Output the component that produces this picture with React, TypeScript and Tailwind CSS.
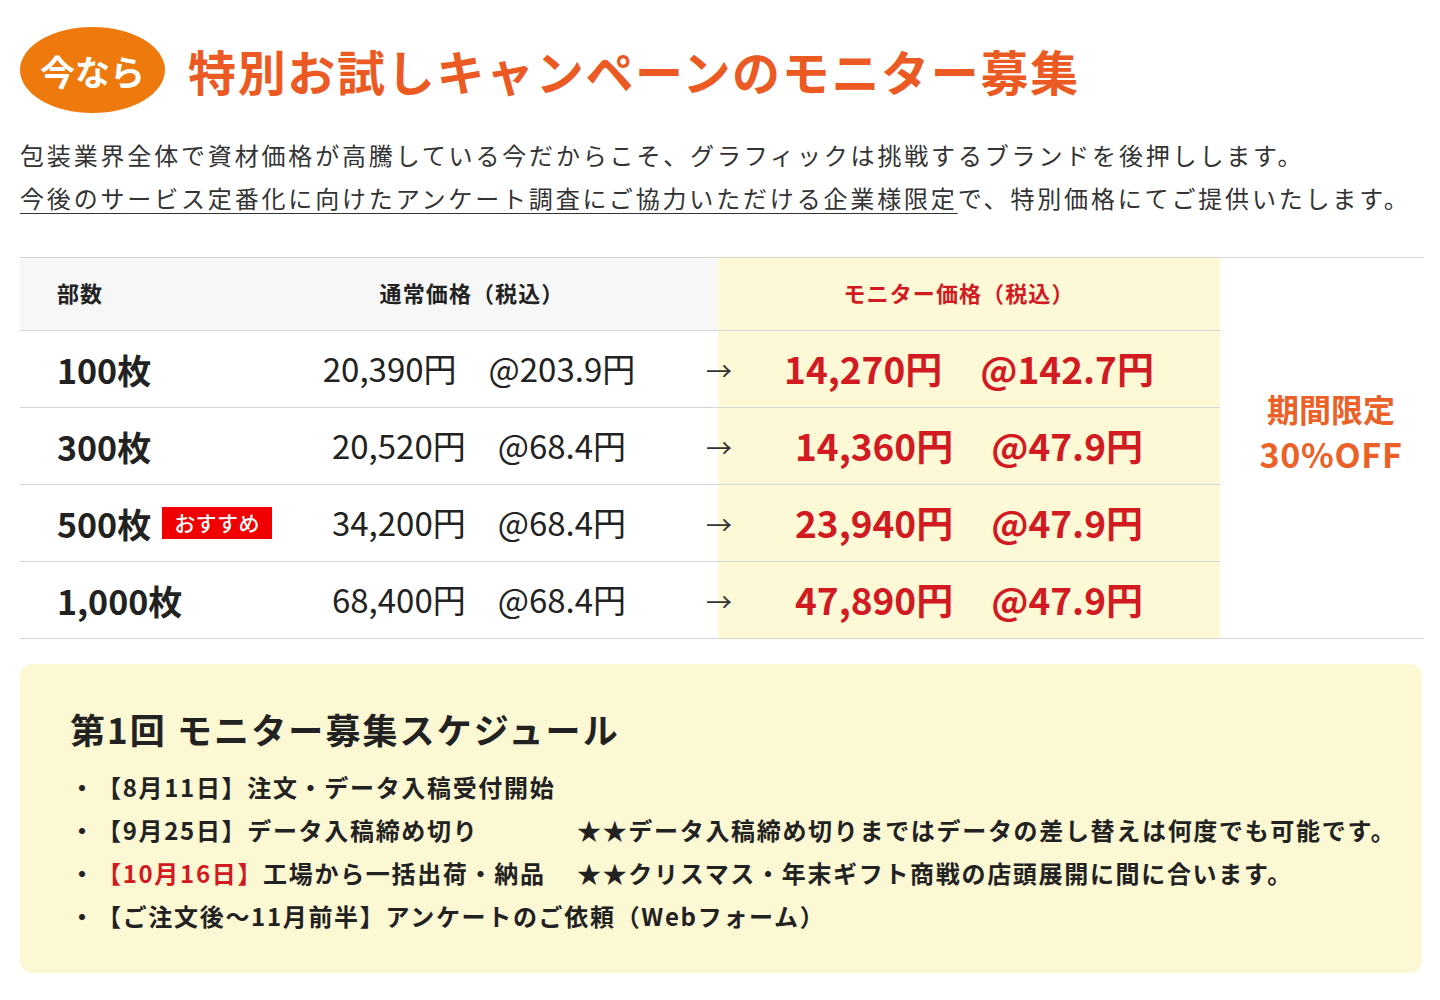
import React from "react";

type Row = {
  qty: string;
  recommend?: boolean;
  normal: string;
  normalUnit: string;
  monitor: string;
  monitorUnit: string;
};

const ROWS: Row[] = [
  { qty: "100枚", normal: "20,390円", normalUnit: "@203.9円", monitor: "14,270円", monitorUnit: "@142.7円" },
  { qty: "300枚", normal: "20,520円", normalUnit: "@68.4円", monitor: "14,360円", monitorUnit: "@47.9円" },
  { qty: "500枚", recommend: true, normal: "34,200円", normalUnit: "@68.4円", monitor: "23,940円", monitorUnit: "@47.9円" },
  { qty: "1,000枚", normal: "68,400円", normalUnit: "@68.4円", monitor: "47,890円", monitorUnit: "@47.9円" },
];

const FONT = { fontFamily: '"Noto Sans CJK JP", "Noto Sans", sans-serif' };

export default function App() {
  return (
    <div style={FONT} className="min-h-[1000px] w-[1440px] bg-white px-[20px] pt-[27px] text-[#222]">
      {/* Heading */}
      <div className="flex items-center">
        <div className="flex h-[86px] w-[145px] shrink-0 items-center justify-center rounded-[50%] bg-[#ee7a0e] text-[35px] font-bold leading-none text-white">
          今なら
        </div>
        <h1 className="ml-[23px] whitespace-nowrap text-[48px] font-bold leading-none tracking-[0.035em] text-[#ec5a24]">
          特別お試しキャンペーンのモニター募集
        </h1>
      </div>

      {/* Lead */}
      <div className="mt-[20px] whitespace-nowrap text-[24px] leading-[43px] tracking-[0.118em] text-[#333]">
        <p>包装業界全体で資材価格が高騰している今だからこそ、グラフィックは挑戦するブランドを後押しします。</p>
        <p>
          <span className="underline decoration-1 underline-offset-[5px]">
            今後のサービス定番化に向けたアンケート調査にご協力いただける企業様限定
          </span>
          で、特別価格にてご提供いたします。
        </p>
      </div>

      {/* Price table */}
      <div className="mt-[38px] grid w-[1404px] grid-cols-[220px_478px_502px_204px] grid-rows-[72px_77px_77px_77px_77px] border-y border-[#d6d6d6]">
        <div className="flex items-center bg-[#f7f7f7] pb-[4px] pl-[37px] text-[22px] font-bold tracking-[0.05em]">部数</div>
        <div className="flex items-center justify-center bg-[#f7f7f7] pb-[4px] pr-[14px] text-[22px] font-bold tracking-[0.05em]">
          通常価格（税込）
        </div>
        <div className="flex items-center justify-center bg-[#fdf9d6] pb-[4px] pr-[20px] text-[22px] font-bold tracking-[0.05em] text-[#d21a22]">
          モニター価格（税込）
        </div>
        <div className="row-span-5 flex flex-col items-center justify-center pb-[34px] pl-[18px] text-[32px] font-bold leading-[46px] text-[#ec6128]">
          <span>期間限定</span>
          <span className="text-[34px] tracking-[0.02em]">30%OFF</span>
        </div>

        {ROWS.map((r) => (
          <React.Fragment key={r.qty}>
            <div className="flex items-center whitespace-nowrap border-t border-[#d6d6d6] pl-[37px]">
              <span className="shrink-0 text-[34px] font-bold">{r.qty}</span>
              {r.recommend && (
                <span className="ml-[11px] flex h-[32px] shrink-0 items-center bg-[#f00000] px-[12px] text-[21px] font-medium tracking-[0.02em] text-white">
                  おすすめ
                </span>
              )}
            </div>
            <div className="relative flex items-center justify-center whitespace-nowrap border-t border-[#d6d6d6] text-[33px]">
              <span>{r.normal}</span>
              <span className="ml-[32px]">{r.normalUnit}</span>
              <span className="absolute right-[-14px] top-1/2 -translate-y-1/2 text-[26px] text-[#333]">→</span>
            </div>
            <div className="flex items-center justify-center whitespace-nowrap border-t border-[#d6d6d6] bg-[#fdf9d6] text-[37px] font-bold text-[#d21a22]">
              <span>{r.monitor}</span>
              <span className="ml-[38px]">{r.monitorUnit}</span>
            </div>
          </React.Fragment>
        ))}
      </div>

      {/* Schedule */}
      <div className="mt-[25px] w-[1402px] rounded-[12px] bg-[#fdf8d4] px-[50px] pb-[36px] pt-[41px]">
        <h2 className="text-[35px] font-bold leading-[48px] tracking-[0.06em]">第1回 モニター募集スケジュール</h2>
        <ul className="mt-[12px] whitespace-nowrap text-[24px] font-bold leading-[43px] tracking-[0.07em]">
          <li className="flex">
            <span className="w-[27px] shrink-0">・</span>
            <span>【8月11日】注文・データ入稿受付開始</span>
          </li>
          <li className="flex">
            <span className="w-[27px] shrink-0">・</span>
            <span className="w-[480px] shrink-0">【9月25日】データ入稿締め切り</span>
            <span>★★データ入稿締め切りまではデータの差し替えは何度でも可能です。</span>
          </li>
          <li className="flex">
            <span className="w-[27px] shrink-0">・</span>
            <span className="w-[480px] shrink-0">
              <span className="text-[#d21a22]">【10月16日】</span>工場から一括出荷・納品
            </span>
            <span>★★クリスマス・年末ギフト商戦の店頭展開に間に合います。</span>
          </li>
          <li className="flex">
            <span className="w-[27px] shrink-0">・</span>
            <span>【ご注文後～11月前半】アンケートのご依頼（Webフォーム）</span>
          </li>
        </ul>
      </div>
    </div>
  );
}
